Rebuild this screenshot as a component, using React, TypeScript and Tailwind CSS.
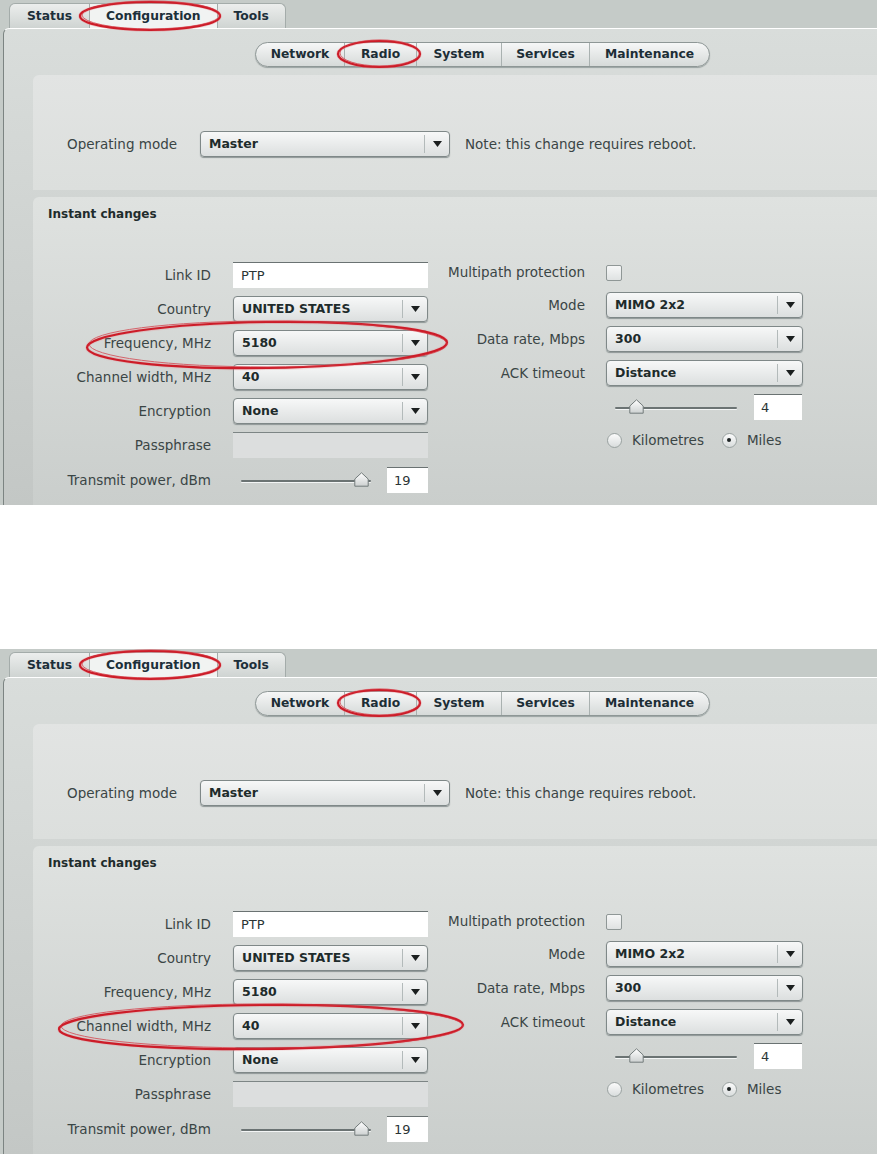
import React from 'react';

type Circle = 'frequency' | 'channel';

const Arrow = () => (
  <svg width="9" height="6" viewBox="0 0 9 6">
    <path d="M0 0h9L4.5 6z" fill="#1b1f1f" />
  </svg>
);

const Select = ({ value, width }: { value: string; width: string }) => (
  <div
    className={`flex h-[26px] items-center rounded-[4px] border border-[#7f8888] bg-linear-to-b from-[#f7f8f8] to-[#dcdfdf] shadow-[0_1px_1px_#8e9696] ${width}`}
  >
    <span className="flex-1 pl-[8px] text-[12.5px] font-bold text-[#1e2b2b]">{value}</span>
    <div className="h-[18px] w-px bg-[#b3baba]" />
    <div className="flex w-[24px] items-center justify-center">
      <Arrow />
    </div>
  </div>
);

const Thumb = () => (
  <svg width="15" height="15" viewBox="0 0 15 15">
    <defs>
      <linearGradient id="thumbFill" x1="0" y1="0" x2="0" y2="1">
        <stop offset="0" stopColor="#ffffff" />
        <stop offset="1" stopColor="#cdd1d1" />
      </linearGradient>
    </defs>
    <path d="M7.5 0.8L14.2 7V14.2H0.8V7Z" fill="url(#thumbFill)" stroke="#737b7b" strokeWidth="1" />
  </svg>
);

const Slider = ({ track, thumb }: { track: string; thumb: string }) => (
  <div className={`relative h-[16px] ${track}`}>
    <div className="absolute left-0 right-0 top-[8px] h-[2px] rounded-full bg-[#6b7373] shadow-[0_1px_0_#f3f5f5]" />
    <div className={`absolute top-0 ${thumb}`}>
      <Thumb />
    </div>
  </div>
);

const NumberBox = ({ value, width }: { value: string; width: string }) => (
  <div className={`flex h-[26px] items-center border-t border-[#6a7272] bg-white pl-[7px] text-[13px] text-[#2b3535] ${width}`}>
    {value}
  </div>
);

const Radio = ({ checked }: { checked?: boolean }) => (
  <div className="flex h-[15px] w-[15px] items-center justify-center rounded-full border border-[#9aa2a1] bg-linear-to-b from-[#fbfbfb] to-[#d9dddd]">
    {checked && <div className="h-[4px] w-[4px] rounded-full bg-[#1f2525]" />}
  </div>
);

const Label = ({ children, width }: { children: React.ReactNode; width: string }) => (
  <div className={`text-right text-[13.5px] text-[#3a4545] ${width}`}>{children}</div>
);

const LeftRow = ({ label, children }: { label: string; children: React.ReactNode }) => (
  <div className="flex h-[26px] items-center">
    <Label width="w-[178px]">{label}</Label>
    <div className="ml-[22px] w-[195px]">{children}</div>
  </div>
);

const Tabs = () => (
  <div className="flex h-[28px] shrink-0 items-end pl-[9px] text-[12.3px] font-bold text-[#1c2f3a]">
    <div className="flex h-[25px] items-center rounded-tl-[6px] border border-b-0 border-[#a4acaa] bg-linear-to-b from-[#eceeed] to-[#cfd4d2] px-[17px]">
      Status
    </div>
    <div className="flex h-[25px] items-center border-t border-[#a4acaa] bg-[#f1f3f2] px-[16px]">
      Configuration
    </div>
    <div className="flex h-[25px] items-center rounded-tr-[6px] border border-b-0 border-[#a4acaa] bg-linear-to-b from-[#eceeed] to-[#cfd4d2] px-[16px]">
      Tools
    </div>
  </div>
);

const SubNav = () => {
  const items = [
    { t: 'Network', w: 'w-[88px]' },
    { t: 'Radio', w: 'w-[72px]' },
    { t: 'System', w: 'w-[85px]' },
    { t: 'Services', w: 'w-[88px]' },
    { t: 'Maintenance', w: 'w-[120px]' },
  ];
  return (
    <div className="flex h-[46px] shrink-0 items-start pl-[251px] pt-[13px]">
      <div className="flex h-[25px] overflow-hidden rounded-full border border-[#8e9796] bg-linear-to-b from-[#f6f7f7] to-[#d6dad9] shadow-[0_1px_1px_#9aa2a1]">
        {items.map((it, i) => (
          <div
            key={it.t}
            className={`flex items-center justify-center text-[12.3px] font-bold text-[#1d2e36] ${it.w} ${i > 0 ? 'border-l border-[#a9b1b0]' : ''}`}
          >
            {it.t}
          </div>
        ))}
      </div>
    </div>
  );
};

const Ellipses = ({ circle }: { circle: Circle }) => (
  <svg className="pointer-events-none absolute left-0 top-0" width="877" height="505">
    <g fill="none" stroke="#e88a90" strokeWidth="3.5" opacity="0.45">
      <ellipse cx="150" cy="16" rx="70" ry="14" />
      <ellipse cx="379" cy="54" rx="41" ry="13" />
      {circle === 'frequency' ? (
        <ellipse cx="267" cy="345" rx="180" ry="23" transform="rotate(-0.8 267 345)" />
      ) : (
        <ellipse cx="261" cy="378" rx="202" ry="22" transform="rotate(-0.6 261 378)" />
      )}
    </g>
    <g fill="none" stroke="#cc1c28" strokeWidth="2.2">
      <ellipse cx="150" cy="16" rx="70" ry="14" />
      <ellipse cx="379" cy="54" rx="41" ry="13" />
      {circle === 'frequency' ? (
        <ellipse cx="267" cy="345" rx="180" ry="23" transform="rotate(-0.8 267 345)" />
      ) : (
        <ellipse cx="261" cy="378" rx="202" ry="22" transform="rotate(-0.6 261 378)" />
      )}
    </g>
    <g fill="none" stroke="#d3343f" strokeWidth="1" opacity="0.7">
      <ellipse cx="151" cy="15" rx="69" ry="14" />
      <ellipse cx="380" cy="53" rx="40" ry="13" />
      {circle === 'frequency' ? (
        <ellipse cx="268" cy="344" rx="179" ry="23" />
      ) : (
        <ellipse cx="262" cy="377" rx="201" ry="22" />
      )}
    </g>
  </svg>
);

const Panel = ({ circle }: { circle: Circle }) => (
  <div className="relative flex h-[505px] flex-col overflow-hidden bg-[#c5cbc8]">
    <Tabs />
    <div className="ml-[3px] flex flex-1 flex-col rounded-tl-[6px] border-l border-t border-l-[#7c8482] border-t-white bg-linear-to-b from-[#d9dddb] to-[#c3c7c5]">
      <SubNav />

      {/* operating mode */}
      <div className="ml-[29px] h-[115px] shrink-0 rounded-tl-[6px] bg-linear-to-b from-[#e2e4e3] to-[#dcdfdd] pl-[34px] pt-[56px]">
        <div className="flex items-center">
          <div className="w-[133px] text-[13.5px] text-[#3a4545]">Operating mode</div>
          <Select value="Master" width="w-[250px]" />
          <div className="ml-[15px] text-[13.5px] text-[#3a4545]">Note: this change requires reboot.</div>
        </div>
      </div>

      {/* instant changes */}
      <div className="ml-[29px] mt-[7px] flex-1 rounded-tl-[6px] bg-linear-to-b from-[#dfe2e0] to-[#cacecc] pt-[8px]">
        <div className="pl-[15px] text-[12px] font-bold leading-[18px] text-[#1f2c2c]">Instant changes</div>

        <div className="mt-[38px] flex items-start">
          <div className="flex flex-col gap-[8px] pt-[1px]">
            <LeftRow label="Link ID">
              <div className="flex h-[26px] items-center border-t border-[#6a7272] bg-white pl-[8px] text-[13px] text-[#2b3535]">PTP</div>
            </LeftRow>
            <LeftRow label="Country">
              <Select value="UNITED STATES" width="w-[195px]" />
            </LeftRow>
            <LeftRow label="Frequency, MHz">
              <Select value="5180" width="w-[195px]" />
            </LeftRow>
            <LeftRow label="Channel width, MHz">
              <Select value="40" width="w-[195px]" />
            </LeftRow>
            <LeftRow label="Encryption">
              <Select value="None" width="w-[195px]" />
            </LeftRow>
            <LeftRow label="Passphrase">
              <div className="h-[26px] border-t border-[#7d8585] bg-[#dcdede]" />
            </LeftRow>
            <div className="mt-[1px] flex h-[26px] items-center">
              <Label width="w-[178px]">Transmit power, dBm</Label>
              <div className="ml-[22px] flex w-[195px] items-center">
                <div className="ml-[8px]">
                  <Slider track="w-[130px]" thumb="left-[113px]" />
                </div>
                <div className="ml-[16px]">
                  <NumberBox value="19" width="w-[41px]" />
                </div>
              </div>
            </div>
          </div>

          <div className="flex flex-col gap-[8px]">
            <div className="flex h-[23px] items-center">
              <Label width="w-[157px]">Multipath protection</Label>
              <div className="ml-[21px] h-[16px] w-[16px] rounded-[2px] border border-[#8f9796] bg-linear-to-b from-[#f6f7f7] to-[#dfe2e2]" />
            </div>
            <div className="flex h-[26px] items-center">
              <Label width="w-[157px]">Mode</Label>
              <div className="ml-[21px]">
                <Select value="MIMO 2x2" width="w-[197px]" />
              </div>
            </div>
            <div className="flex h-[26px] items-center">
              <Label width="w-[157px]">Data rate, Mbps</Label>
              <div className="ml-[21px]">
                <Select value="300" width="w-[197px]" />
              </div>
            </div>
            <div className="flex h-[26px] items-center">
              <Label width="w-[157px]">ACK timeout</Label>
              <div className="ml-[21px]">
                <Select value="Distance" width="w-[197px]" />
              </div>
            </div>
            <div className="flex h-[26px] items-center pl-[178px]">
              <div className="ml-[9px]">
                <Slider track="w-[122px]" thumb="left-[14px]" />
              </div>
              <div className="ml-[17px]">
                <NumberBox value="4" width="w-[48px]" />
              </div>
            </div>
            <div className="flex h-[24px] items-center gap-[10px] pl-[179px] text-[13.5px] text-[#3a4545]">
              <Radio />
              <span>Kilometres</span>
              <span className="ml-[8px]">
                <Radio checked />
              </span>
              <span>Miles</span>
            </div>
          </div>
        </div>
      </div>
    </div>
    <Ellipses circle={circle} />
  </div>
);

export default function App() {
  return (
    <div className="h-[1155px] w-[877px] overflow-hidden bg-white font-['DejaVu_Sans',Verdana,sans-serif]">
      <Panel circle="frequency" />
      <div className="h-[144px]" />
      <Panel circle="channel" />
    </div>
  );
}
